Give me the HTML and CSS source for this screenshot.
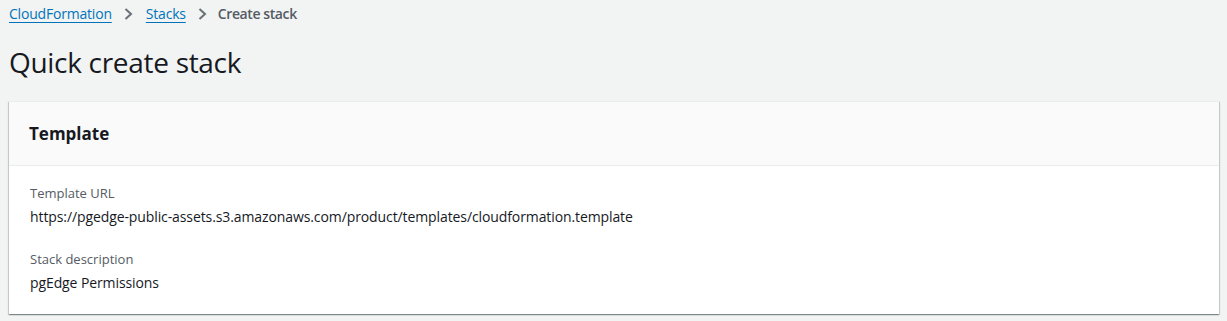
FILE: index.html
```html
<!DOCTYPE html>
<html>
<head>
<meta charset="utf-8">
<link rel="stylesheet" href="styles.css">
</head>
<body>
<div class="page">
  <nav class="crumbs">
    <a class="crumb-link" href="#">CloudFormation</a>
    <svg class="chev" width="10" height="16" viewBox="0 0 10 16"><path d="M1.5 3 7 8l-5.5 5" fill="none" stroke="#687078" stroke-width="2"/></svg>
    <a class="crumb-link" href="#">Stacks</a>
    <svg class="chev" width="10" height="16" viewBox="0 0 10 16"><path d="M1.5 3 7 8l-5.5 5" fill="none" stroke="#687078" stroke-width="2"/></svg>
    <span class="crumb-current">Create stack</span>
  </nav>
  <h1 class="title">Quick create stack</h1>
  <section class="card">
    <header class="card-head"><h2>Template</h2></header>
    <div class="card-body">
      <div class="field">
        <div class="label">Template URL</div>
        <div class="value">https://pgedge-public-assets.s3.amazonaws.com/product/templates/cloudformation.template</div>
      </div>
      <div class="field">
        <div class="label">Stack description</div>
        <div class="value">pgEdge Permissions</div>
      </div>
    </div>
  </section>
</div>
</body>
</html>
```
FILE: styles.css
```css
html, body { margin: 0; padding: 0; }
body {
  background: #f2f3f3;
  font-family: "Open Sans", "Noto Sans", sans-serif;
  color: #16191f;
  width: 1227px;
  height: 321px;
  overflow: hidden;
}
.page { padding: 4px 8px 0 9px; }
.crumbs {
  display: flex;
  align-items: center;
  gap: 12px;
  font-size: 14px;
  line-height: 20px;
  height: 20px;
  letter-spacing: -0.2px;
}
.crumb-link { color: #0073bb; text-decoration: underline; text-underline-offset: 3px; }
.crumb-current { color: #545b64; font-weight: 600; letter-spacing: -0.4px; margin-left: -2px; }
.chev { display: block; }
.title {
  margin: 20px 0 0 0;
  font-size: 28px;
  line-height: 36px;
  font-weight: 400;
  letter-spacing: -0.3px;
}
.card {
  margin-top: 21px;
  width: 1210px;
  background: #fff;
  box-shadow: 0 1px 1px 0 rgba(0,28,36,0.3), 1px 1px 1px 0 rgba(0,28,36,0.15), -1px 1px 1px 0 rgba(0,28,36,0.15);
  border-top: 1px solid #eaeded;
}
.card-head {
  background: #fafafa;
  border-bottom: 1px solid #eaeded;
  padding: 18px 20px;
  height: 27px;
}
.card-head h2 {
  margin: 0;
  font-size: 17px;
  line-height: 27px;
  font-weight: 700;
}
.card-body { padding: 17px 21px 20px 21px; display: flex; flex-direction: column; gap: 21px; }
.field { display: flex; flex-direction: column; gap: 3px; }
.label { font-size: 13px; line-height: 20px; color: #545b64; }
.value { font-size: 14px; line-height: 22px; color: #16191f; letter-spacing: -0.1px; }
```
